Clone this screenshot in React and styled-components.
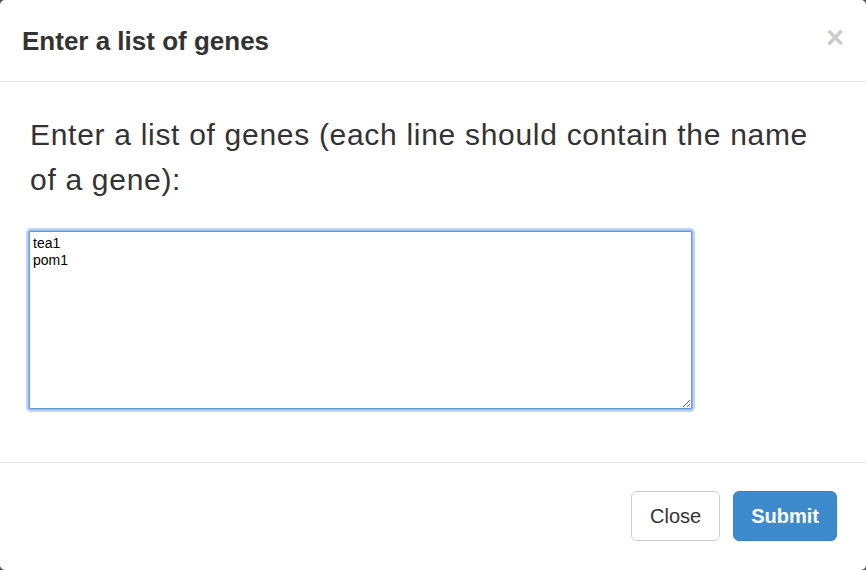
import React from "react";
import styled, { createGlobalStyle } from "styled-components";

const GlobalStyle = createGlobalStyle`
  html, body {
    margin: 0;
    padding: 0;
    background: #4d4d4d;
  }
  * {
    box-sizing: border-box;
  }
`;

const Modal = styled.div`
  width: 866px;
  height: 570px;
  display: flex;
  flex-direction: column;
  background: #fff;
  border-radius: 5px;
  overflow: hidden;
  font-family: "Liberation Sans", Arial, Helvetica, sans-serif;
  color: #333;
`;

const Header = styled.div`
  height: 82px;
  display: flex;
  align-items: center;
  justify-content: space-between;
  padding: 0 22px;
  border-bottom: 1px solid #e5e5e5;
`;

const Title = styled.h4`
  margin: 0;
  font-size: 26px;
  font-weight: 700;
  line-height: 36px;
  color: #333;
`;

const CloseX = styled.button`
  border: 0;
  background: none;
  padding: 0;
  margin-top: -6px;
  font-family: "Liberation Sans", Arial, sans-serif;
  font-size: 31px;
  font-weight: 700;
  line-height: 1;
  color: #000;
  opacity: 0.2;
  cursor: pointer;
`;

const Body = styled.div`
  flex: 1;
  display: flex;
  flex-direction: column;
  align-items: flex-start;
  padding: 30px 29px 0;
`;

const Prompt = styled.p`
  margin: 0 0 29px 1px;
  font-size: 30px;
  letter-spacing: 0.7px;
  line-height: 45px;
  font-weight: 400;
  color: #333;
`;

const GeneInput = styled.textarea`
  width: 663px;
  height: 178px;
  padding: 3px 3px;
  margin: 0;
  font-family: "Liberation Sans", Arial, sans-serif;
  font-size: 14px;
  line-height: 17px;
  color: #000;
  border: 1px solid #6a9ad4;
  border-radius: 2px;
  box-shadow: 0 0 0 1px #8db8ea, 0 0 1px 3px rgba(130, 175, 230, 0.55);
  outline: none;
  resize: both;
`;

const Footer = styled.div`
  display: flex;
  justify-content: flex-end;
  gap: 13px;
  padding: 28px 29px 29px;
  border-top: 1px solid #e5e5e5;
`;

const Button = styled.button`
  height: 50px;
  padding: 0 ${(p) => (p.$primary ? "17px" : "18px")};
  font-family: "Liberation Sans", Arial, sans-serif;
  font-size: 20px;
  font-weight: ${(p) => (p.$primary ? 700 : 400)};
  border-radius: 6px;
  border: 1px solid ${(p) => (p.$primary ? "#3a7fc0" : "#ccc")};
  background: ${(p) => (p.$primary ? "#3d8bcd" : "#fff")};
  color: ${(p) => (p.$primary ? "#fff" : "#333")};
  cursor: pointer;
`;

export default function App() {
  return (
    <>
      <GlobalStyle />
      <Modal>
        <Header>
          <Title>Enter a list of genes</Title>
          <CloseX aria-label="Close">×</CloseX>
        </Header>
        <Body>
          <Prompt>
            Enter a list of genes (each line should contain the name
            <br />
            of a gene):
          </Prompt>
          <GeneInput defaultValue={"tea1\npom1"} />
        </Body>
        <Footer>
          <Button>Close</Button>
          <Button $primary>Submit</Button>
        </Footer>
      </Modal>
    </>
  );
}
